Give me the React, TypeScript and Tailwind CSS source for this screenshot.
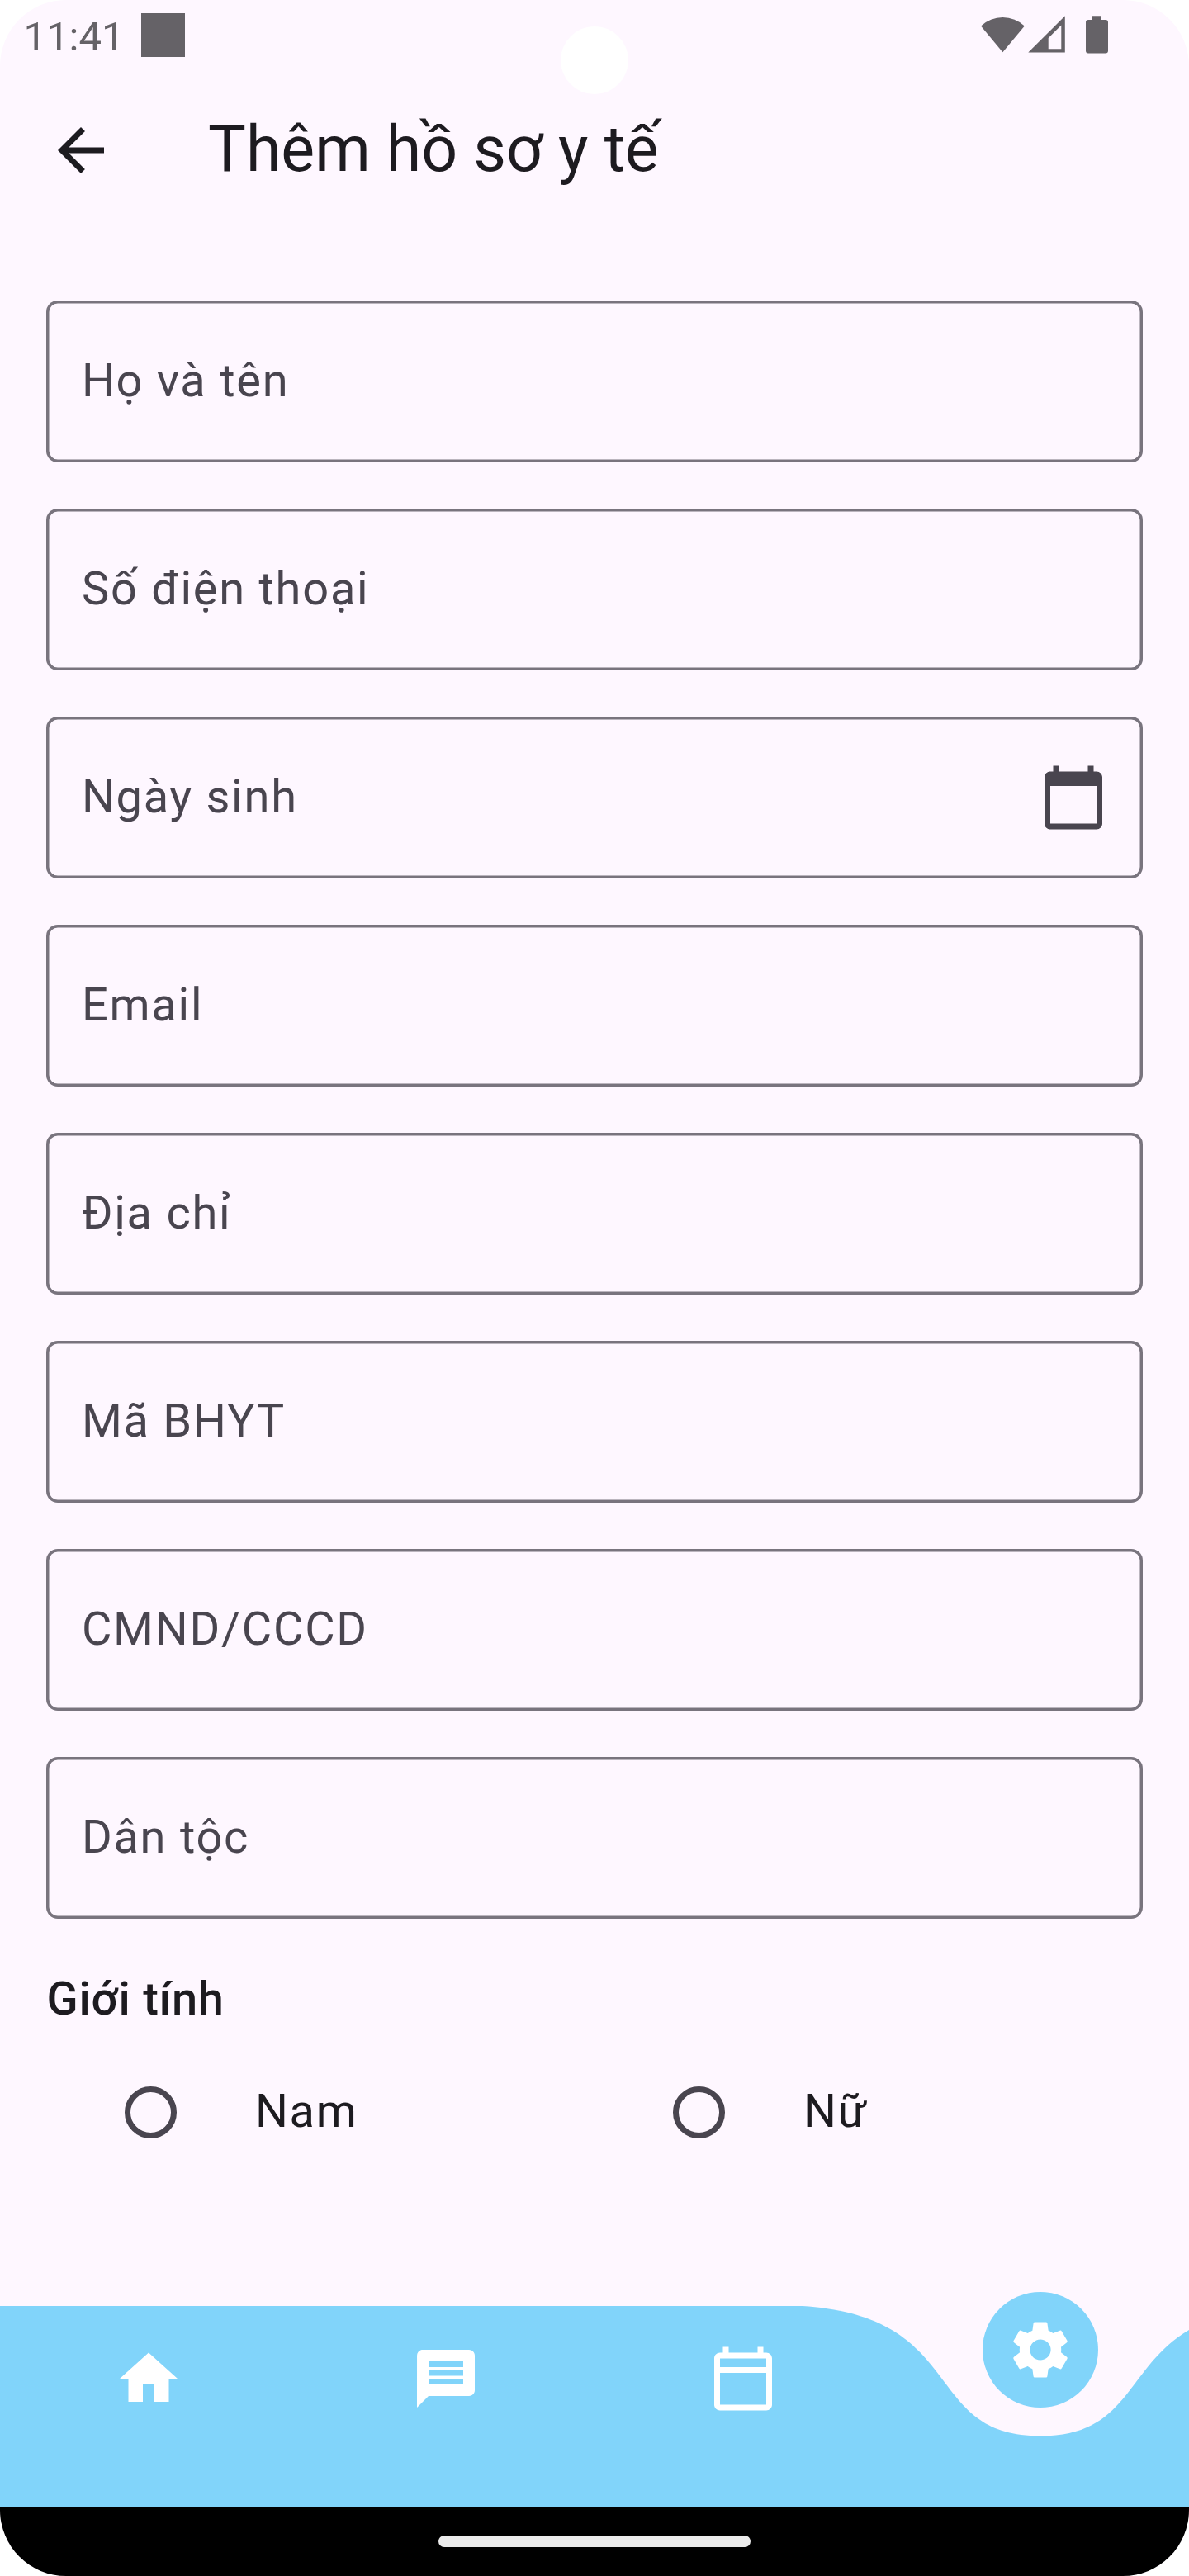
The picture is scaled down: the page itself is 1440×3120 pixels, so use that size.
import type { ReactNode } from "react";

const FIELDS: { label: string; calendar?: boolean }[] = [
  { label: "Họ và tên" },
  { label: "Số điện thoại" },
  { label: "Ngày sinh", calendar: true },
  { label: "Email" },
  { label: "Địa chỉ" },
  { label: "Mã BHYT" },
  { label: "CMND/CCCD" },
  { label: "Dân tộc" },
];

function Icon({ children, className = "" }: { children: ReactNode; className?: string }) {
  return (
    <svg viewBox="0 0 24 24" fill="currentColor" className={`block size-[84px] shrink-0 ${className}`}>
      {children}
    </svg>
  );
}

function StatusBar() {
  return (
    <div className="relative flex h-[84px] items-start justify-between pl-[28.5px] text-[#656267]">
      <div className="flex">
        <span className="h-[84px] w-[142.5px] text-[49px] leading-[89px]">11:41</span>
        <span className="mt-4 size-[53px] bg-[#656267]" />
      </div>
      <div className="absolute left-[679px] top-8 size-[82px] rounded-full bg-white" />
      <svg viewBox="1180 0 180 84" fill="currentColor" className="mr-20 block h-[84px] w-[180px]">
        <path d="M1214.4 63.3 1188 31.4a38.5 38.5 0 0 1 52.8 0z" />
        <path fillRule="evenodd" d="M1245.3 63.6 1289.8 19.3V63.6zM1269.7 59.2H1285.3V30.6L1269.7 46z" />
        <path d="M1323 19.2h11v4.8h5a3 3 0 0 1 3 3v34.6a3 3 0 0 1-3 3h-21a3 3 0 0 1-3-3V27a3 3 0 0 1 3-3h5z" />
      </svg>
    </div>
  );
}

function AppBar() {
  return (
    <header className="flex h-[196px] items-center pl-14 text-[#1d1b20]">
      <Icon>
        <path d="M20 11H7.83l5.59-5.59L12 4l-8 8 8 8 1.41-1.41L7.83 13H20v-2z" />
      </Icon>
      <h1 className="ml-28 whitespace-nowrap pb-0.5 text-[77px] leading-[98px]">Thêm hồ sơ y tế</h1>
    </header>
  );
}

function Field({ label, calendar }: { label: string; calendar?: boolean }) {
  return (
    <div className="flex h-[196px] items-center justify-between rounded-[14px] pl-[42.875px] pr-[42px] text-[#49454f] shadow-[inset_0_0_0_3.5px_#79747e]">
      <span className="pb-0.5 text-[56px] leading-[84px] tracking-[1.75px]">{label}</span>
      {calendar && (
        <Icon>
          <path d="M20 3h-1V1h-2v2H7V1H5v2H4c-1.1 0-2 .9-2 2v16c0 1.1.9 2 2 2h16c1.1 0 2-.9 2-2V5c0-1.1-.9-2-2-2zm0 18H4V8h16v13z" />
        </Icon>
      )}
    </div>
  );
}

function Radio({ label }: { label: string }) {
  return (
    <label className="flex h-[189px] flex-1 items-center pl-[94.5px]">
      <span className="size-[63px] rounded-full border-[7px] border-[#49454f]" />
      <span className="ml-[95.375px] pb-[3px] text-[56px] leading-[84px] tracking-[1.75px]">{label}</span>
    </label>
  );
}

function BottomNav() {
  return (
    <nav className="relative h-[243px]">
      <svg viewBox="0 0 1440 243" fill="#81d4fa" className="absolute inset-0 block h-[243px] w-[1440px]">
        <path d="M0 0H972C1173.6 13.125 1116 157.5 1260 157.5C1404 157.5 1346.4 13.125 1548 0V243H0Z" />
      </svg>
      <div className="relative grid grid-cols-4 justify-items-center text-white">
        <Icon className="mt-[46px]">
          <path d="M10 20v-6h4v6h5v-8h3L12 3 2 12h3v8z" />
        </Icon>
        <Icon className="mt-[46px]">
          <path d="M20 2H4c-1.1 0-1.99.9-1.99 2L2 22l4-4h14c1.1 0 2-.9 2-2V4c0-1.1-.9-2-2-2zm-2 12H6v-2h12v2zm0-3H6V9h12v2zm0-3H6V6h12v2z" />
        </Icon>
        <Icon className="mt-[46px]">
          <path d="M20 3h-1V1h-2v2H7V1H5v2H4c-1.1 0-2 .9-2 2v16c0 1.1.9 2 2 2h16c1.1 0 2-.9 2-2V5c0-1.1-.9-2-2-2zm0 18H4V10h16v11zm0-13H4V5h16v3z" />
        </Icon>
        <div className="-mt-[17.5px] flex size-[140px] items-center justify-center rounded-full bg-[#81d4fa]">
          <Icon>
            <path d="M19.14 12.94c.04-.3.06-.61.06-.94 0-.32-.02-.64-.07-.94l2.03-1.58c.18-.14.23-.41.12-.61l-1.92-3.32c-.12-.22-.37-.29-.59-.22l-2.39.96c-.5-.38-1.03-.7-1.62-.94l-.36-2.54c-.04-.24-.24-.41-.48-.41h-3.84c-.24 0-.43.17-.47.41l-.36 2.54c-.59.24-1.13.57-1.62.94l-2.39-.96c-.22-.08-.47 0-.59.22L2.74 8.87c-.12.21-.08.47.12.61l2.03 1.58c-.05.3-.09.63-.09.94s.02.64.07.94l-2.03 1.58c-.18.14-.23.41-.12.61l1.92 3.32c.12.22.37.29.59.22l2.39-.96c.5.38 1.03.7 1.62.94l.36 2.54c.05.24.24.41.48.41h3.84c.24 0 .44-.17.47-.41l.36-2.54c.59-.24 1.13-.56 1.62-.94l2.39.96c.22.08.47 0 .59-.22l1.92-3.32c.12-.22.07-.47-.12-.61l-2.01-1.58zM12 15.6c-1.98 0-3.6-1.62-3.6-3.6s1.62-3.6 3.6-3.6 3.6 1.62 3.6 3.6-1.62 3.6-3.6 3.6z" />
          </Icon>
        </div>
      </div>
    </nav>
  );
}

export default function App() {
  return (
    <div className="bg-white">
      <div className="flex h-[3120px] w-[1440px] flex-col overflow-hidden rounded-[80px] bg-[#fef7ff] font-['Roboto',sans-serif] text-[#1d1b20]">
        <StatusBar />
        <AppBar />
        <main className="flex flex-1 flex-col px-14 pt-[84px]">
          <div className="flex flex-col gap-14">
            {FIELDS.map((f) => (
              <Field key={f.label} {...f} />
            ))}
          </div>
          <h2 className="mb-0.5 mt-14 pl-[0.5px] text-[56px] font-medium leading-[82px] tracking-[0.75px]">Giới tính</h2>
          <div className="flex">
            <Radio label="Nam" />
            <Radio label="Nữ" />
          </div>
        </main>
        <BottomNav />
        <div className="flex h-[84px] items-center justify-center bg-black">
          <div className="h-[14px] w-[378px] rounded-full bg-[#ebebeb]" />
        </div>
      </div>
    </div>
  );
}
